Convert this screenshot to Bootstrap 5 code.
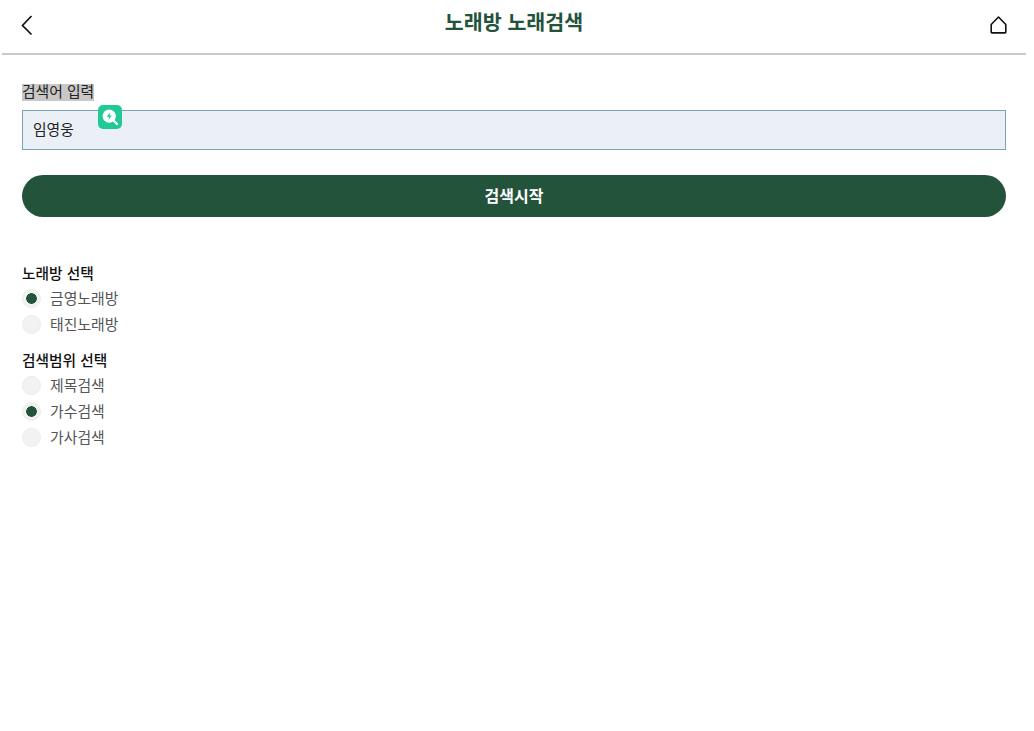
<!DOCTYPE html>
<html lang="ko">
<head>
<meta charset="utf-8">
<title>노래방 노래검색</title>
<link rel="stylesheet" href="https://cdn.jsdelivr.net/npm/bootstrap@5.3.0/dist/css/bootstrap.min.css">
<style>
body{font-family:"Noto Sans CJK KR","Noto Sans",sans-serif;background:#fff;color:#111;font-size:15px}
.page-wrap{width:1026px;padding-left:2px}
.top-bar{height:55px;border-bottom:2px solid #c5cbc9;padding:0 19px 0 18px}
.top-title{font-size:20.6px;font-weight:700;color:#24533b;line-height:1;margin:0 0 0 4px;padding-bottom:10px}
.top-icon{display:block;line-height:0;margin-bottom:4px}
.main-area{padding:29px 20px 0 20px}
.field-label{font-size:14.8px;line-height:13px;padding-bottom:4px;background:#c8c8c8;color:#222;margin:0 0 9px}
.input-holder{position:relative}
.kw-input.form-control{height:40px;border:1px solid #7ba3b8;border-radius:0;background:#ebf0f6;font-size:14.8px;color:#222;padding:0 10px 3px;box-shadow:none}
.floating-badge{position:absolute;left:76px;top:-5px;width:24px;height:24px;background:#21c997;border-radius:5px}
.go-btn.btn{display:block;width:100%;height:42px;margin-top:25px;background:#24533b;border:0;border-radius:21px;color:#fff;font-size:16px;font-weight:700;padding:0 0 2px}
.group-title{font-size:14.7px;font-weight:500;line-height:20px;color:#111;margin:0}
.group-one{margin-top:46px}
.group-two{margin-top:13px}
.radio-row{display:flex;align-items:center;gap:9px;height:26px;margin:0;color:#555;font-size:14.9px}
.radio-row input{appearance:none;width:19px;height:19px;border-radius:50%;background:#f1f2f2;border:1px solid #ebecec;margin:0;flex:none}
.radio-row input:checked{background:radial-gradient(circle,#24533b 0,#24533b 5px,#f1f2f2 5.6px)}
.rows-one{margin-top:2px}
.rows-two{margin-top:2px}
</style>
</head>
<body>
<div class="page-wrap">
  <header class="top-bar d-flex align-items-center justify-content-between">
    <a href="#" class="top-icon" aria-label="뒤로">
      <svg width="14" height="22" viewBox="0 0 14 22" fill="none" stroke="#111" stroke-width="1.7"><path d="M11.5 2 L2.5 11.5 L11.5 20.5"/></svg>
    </a>
    <h1 class="top-title">노래방 노래검색</h1>
    <a href="#" class="top-icon" aria-label="홈">
      <svg width="17" height="18" viewBox="0 0 17 18" fill="none" stroke="#111" stroke-width="1.6"><path d="M8.5 1 L15.8 8.5 V16 Q15.8 16.9 15 16.9 H2 Q1.2 16.9 1.2 16 V8.5 Z" stroke-linejoin="round"/></svg>
    </a>
  </header>
  <main class="main-area">
    <div class="d-flex"><label class="field-label" for="kw">검색어 입력</label></div>
    <div class="input-holder">
      <input id="kw" class="form-control kw-input" type="text" value="임영웅">
      <div class="floating-badge d-flex align-items-center justify-content-center">
        <svg width="18" height="18" viewBox="0 0 18 18"><circle cx="8.2" cy="8.2" r="6.6" fill="#fff"/><path d="M12.5 12.5 L16 16" stroke="#fff" stroke-width="2.2" stroke-linecap="round"/><path d="M9 4.2 L5.8 8.8 H8 L7.4 12 L10.8 7.4 H8.6 Z" fill="#21c997"/></svg>
      </div>
    </div>
    <button type="button" class="btn go-btn">검색시작</button>
    <section class="group-one">
      <p class="group-title">노래방 선택</p>
      <div class="rows-one">
        <label class="radio-row"><input type="radio" name="room" checked>금영노래방</label>
        <label class="radio-row"><input type="radio" name="room">태진노래방</label>
      </div>
    </section>
    <section class="group-two">
      <p class="group-title">검색범위 선택</p>
      <div class="rows-two">
        <label class="radio-row"><input type="radio" name="scope">제목검색</label>
        <label class="radio-row"><input type="radio" name="scope" checked>가수검색</label>
        <label class="radio-row"><input type="radio" name="scope">가사검색</label>
      </div>
    </section>
  </main>
</div>
<script src="https://cdn.jsdelivr.net/npm/bootstrap@5.3.0/dist/js/bootstrap.bundle.min.js"></script>
</body>
</html>
